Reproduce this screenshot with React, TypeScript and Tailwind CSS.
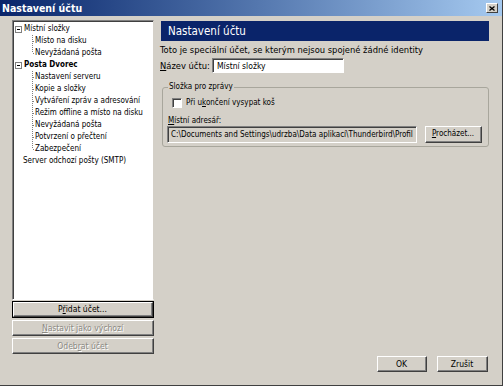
import React from "react";

const font = { fontFamily: '"DejaVu Sans Condensed", "Liberation Sans", Arial, sans-serif' };

function TreeBox() {
  return (
    <span className="inline-flex w-[7px] h-[7px] border border-[#808080] bg-white items-center justify-center mr-[2px]">
      <span className="block w-[3px] h-[1px] bg-black" />
    </span>
  );
}

function Child({ label, last }: { label: string; last?: boolean }) {
  return (
    <div className="flex items-center h-[12px]">
      <svg width="19" height="12" className="shrink-0" viewBox="0 0 19 12">
        <line x1="17.5" y1="0" x2="17.5" y2={last ? 6 : 12} stroke="#808080" strokeDasharray="1 1" />
        <line x1="18" y1="6.5" x2="19" y2="6.5" stroke="#808080" strokeDasharray="1 1" />
      </svg>
      <span className="ml-[1px] whitespace-nowrap">{label}</span>
    </div>
  );
}

function Btn({
  children,
  className = "",
  def,
  disabled,
}: {
  children: React.ReactNode;
  className?: string;
  def?: boolean;
  disabled?: boolean;
}) {
  return (
    <div
      className={
        "flex items-center justify-center bg-[#d4d0c8] " +
        (def ? "border border-black " : "") +
        className
      }
    >
      <div className="w-full h-full flex items-center justify-center border-t border-l border-t-white border-l-white border-r border-b border-r-[#404040] border-b-[#404040]">
        <div className="w-full h-full flex items-center justify-center border-r border-b border-r-[#808080] border-b-[#808080]">
          <span
            className={
              "whitespace-nowrap " +
              (disabled ? "text-[#8c8a84] [text-shadow:1px_1px_0_#ffffff]" : "text-black")
            }
          >
            {children}
          </span>
        </div>
      </div>
    </div>
  );
}

export default function App() {
  return (
    <div
      className="w-[503px] h-[386px] bg-[#d4d0c8] flex flex-col text-[8.5px] leading-[12px] text-black overflow-hidden border-r border-b border-r-[#404040] border-b-[#404040]"
      style={font}
    >
      {/* title bar */}
      <div className="h-[16px] shrink-0 flex items-center justify-between bg-gradient-to-r from-[#0a246a] to-[#a6caf0] pl-[2px] pr-[4px]">
        <span className="text-white font-bold text-[10.5px]">Nastavení účtu</span>
        <div className="w-[12px] h-[10px] bg-[#d4d0c8] border-t border-l border-t-white border-l-white border-r border-b border-r-[#404040] border-b-[#404040] flex items-center justify-center">
          <svg width="6" height="5" viewBox="0 0 6 5">
            <path d="M0.5 0.5 L5.5 4.5 M5.5 0.5 L0.5 4.5" stroke="#000" strokeWidth="1.3" />
          </svg>
        </div>
      </div>

      <div className="flex flex-1 pt-[4px] pl-[12px]">
        {/* left column */}
        <div className="w-[142px] h-[334px] flex flex-col">
          <div className="flex-1 bg-white border-t border-l border-t-[#808080] border-l-[#808080] border-r border-b border-r-[#d4d0c8] border-b-white text-[8px]">
            <div className="h-full border-t border-l border-t-[#404040] border-l-[#404040] pt-[1px] pl-[1px]">
              <div className="flex items-center h-[12px]">
                <TreeBox />
                <span>Místní složky</span>
              </div>
              <Child label="Místo na disku" />
              <Child label="Nevyžádaná pošta" last />
              <div className="flex items-center h-[12px]">
                <TreeBox />
                <span className="font-bold">Posta Dvorec</span>
              </div>
              <Child label="Nastavení serveru" />
              <Child label="Kopie a složky" />
              <Child label="Vytváření zpráv a adresování" />
              <Child label="Režim offline a místo na disku" />
              <Child label="Nevyžádaná pošta" />
              <Child label="Potvrzení o přečtení" />
              <Child label="Zabezpečení" last />
              <div className="flex items-center h-[12px] pl-[8px]">
                <span>Server odchozí pošty (SMTP)</span>
              </div>
            </div>
          </div>
          <div className="flex flex-col gap-[2px] mt-[1px]">
            <Btn def className="h-[17px]">
              P<span className="underline">ř</span>idat účet...
            </Btn>
            <Btn disabled className="h-[16px]">
              <span className="underline">N</span>astavit jako výchozí
            </Btn>
            <Btn disabled className="h-[16px]">
              Odeb<span className="underline">r</span>at účet
            </Btn>
          </div>
        </div>

        {/* right column */}
        <div className="w-[330px] h-[352px] ml-[6px] pt-[1px] flex flex-col">
          <div className="ml-[1px] w-[328px] h-[20px] bg-[#0a246a] flex items-center pl-[7px]">
            <span className="text-white text-[11.5px]">Nastavení účtu</span>
          </div>
          <div className="mt-[3px] h-[12px] whitespace-nowrap text-[9.3px]">
            Toto je speciální účet, se kterým nejsou spojené žádné identity
          </div>
          <div className="mt-[2px] flex items-center h-[15px]">
            <span className="w-[52px] text-[9.3px] whitespace-nowrap">
              <span className="underline">N</span>ázev účtu:
            </span>
            <div className="w-[132px] h-[15px] bg-white border-t border-l border-t-[#808080] border-l-[#808080] border-r border-b border-r-white border-b-white">
              <div className="h-full border-t border-l border-t-[#404040] border-l-[#404040] pl-[3px] flex items-center">
                Místní složky
              </div>
            </div>
          </div>

          <fieldset className="mt-[8px] ml-[2px] w-[327px] border border-[#a8a69c] rounded-[3px] px-[4px] pb-[3px] text-[8px]">
            <legend className="ml-[1px] px-[1px] leading-[12px]">Složka pro zprávy</legend>
            <div className="flex items-center h-[12px] mt-[4px] ml-[5px]">
              <span className="w-[10px] h-[10px] bg-white border-t border-l border-t-[#808080] border-l-[#808080] border-r border-b border-r-white border-b-white">
                <span className="block w-full h-full border-t border-l border-t-[#404040] border-l-[#404040]" />
              </span>
              <span className="ml-[4px]">
                Při u<span className="underline">k</span>ončení vysypat koš
              </span>
            </div>
            <div className="mt-[6px] leading-[11px] h-[11px] ml-[1px]">
              <span className="underline">M</span>ístní adresář:
            </div>
            <div className="flex items-center h-[17px] gap-[8px]">
              <div className="w-[250px] h-[17px] shrink-0 bg-[#d4d0c8] border-t border-l border-t-[#808080] border-l-[#808080] border-r border-b border-r-white border-b-white overflow-hidden">
                <div className="h-full border-t border-l border-t-[#404040] border-l-[#404040] pl-[2px] flex items-center whitespace-nowrap overflow-hidden">
                  C:\Documents and Settings\udrzba\Data aplikací\Thunderbird\Profil
                </div>
              </div>
              <Btn className="w-[57px] h-[17px] shrink-0">
                <span className="underline">P</span>rocházet...
              </Btn>
            </div>
          </fieldset>

          <div className="mt-auto flex justify-end gap-[10px] pr-[2px]">
            <Btn className="w-[50px] h-[16px]">OK</Btn>
            <Btn className="w-[51px] h-[16px]">Zrušit</Btn>
          </div>
        </div>
      </div>
    </div>
  );
}
